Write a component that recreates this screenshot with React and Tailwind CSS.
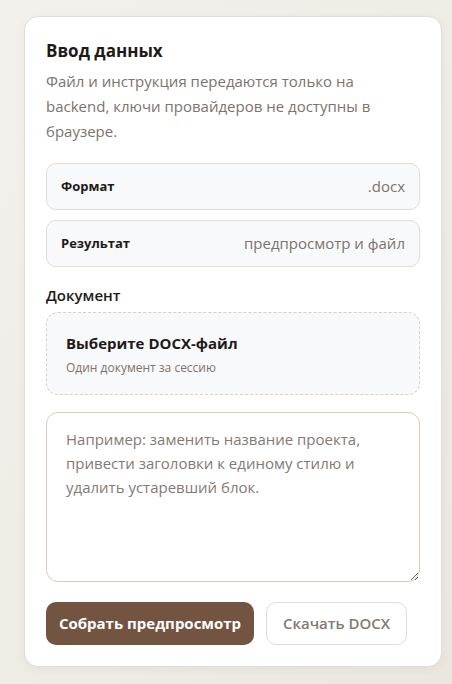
import { useState } from "react";

const InfoRow = ({ label, value }) => (
  <div className="flex h-[47px] items-center justify-between rounded-[10px] border border-[#e3dcd4] bg-[#f8f9fb] px-[14px]">
    <span className="text-[13px] font-bold text-[#1f1a17]">{label}</span>
    <span className="text-[15px] text-[#7d736c]">{value}</span>
  </div>
);

export default function App() {
  const [instruction, setInstruction] = useState("");

  return (
    <div
      className="min-h-[684px] bg-gradient-to-br from-[#f4f1ec] to-[#ebe7e0] pt-[16px] pl-[24px]"
      style={{ fontFamily: '"Open Sans", "Noto Sans", sans-serif' }}
    >
      <div className="w-[418px] rounded-[14px] border border-[#e4ddd5] bg-white px-[21px] pt-[22px] pb-[21px] shadow-[0_2px_8px_rgba(80,60,40,0.06)]">
        {/* Header */}
        <h2 className="text-[17px] font-bold leading-[24px] text-[#1f1a17]">Ввод данных</h2>
        <p className="mt-[6px] text-[15px] leading-[25px] text-[#7d736c]">
          Файл и инструкция передаются только на backend, ключи провайдеров не доступны в браузере.
        </p>

        {/* Info rows */}
        <div className="mt-[19px] flex flex-col gap-[10px]">
          <InfoRow label="Формат" value=".docx" />
          <InfoRow label="Результат" value="предпросмотр и файл" />
        </div>

        {/* Document */}
        <div className="mt-[17px] text-[15px] font-semibold leading-[22px] text-[#1f1a17]">Документ</div>
        <div className="mt-[6px] flex h-[83px] flex-col justify-center rounded-[12px] border border-dashed border-[#d9cfc4] bg-[#f8f9fb] px-[19px]">
          <div className="text-[15px] font-bold leading-[22px] text-[#1f1a17]">Выберите DOCX-файл</div>
          <div className="mt-[6px] text-[12px] leading-[16px] text-[#7d736c]">Один документ за сессию</div>
        </div>

        {/* Instruction */}
        <textarea
          value={instruction}
          onChange={(e) => setInstruction(e.target.value)}
          placeholder="Например: заменить название проекта, привести заголовки к единому стилю и удалить устаревший блок."
          className="mt-[17px] block h-[170px] w-full rounded-[12px] border border-[#d8ccbf] bg-white px-[19px] py-[14px] text-[15px] leading-[24px] text-[#1f1a17] outline-none placeholder:text-[#847a73]"
        />

        {/* Actions */}
        <div className="mt-[20px] flex gap-[12px]">
          <button className="h-[43px] w-[208px] rounded-[10px] bg-[#735440] text-[15px] font-bold text-white">
            Собрать предпросмотр
          </button>
          <button className="h-[43px] w-[141px] rounded-[10px] border border-[#e3dcd4] bg-white text-[15px] font-semibold text-[#847a73]">
            Скачать DOCX
          </button>
        </div>
      </div>
    </div>
  );
}
